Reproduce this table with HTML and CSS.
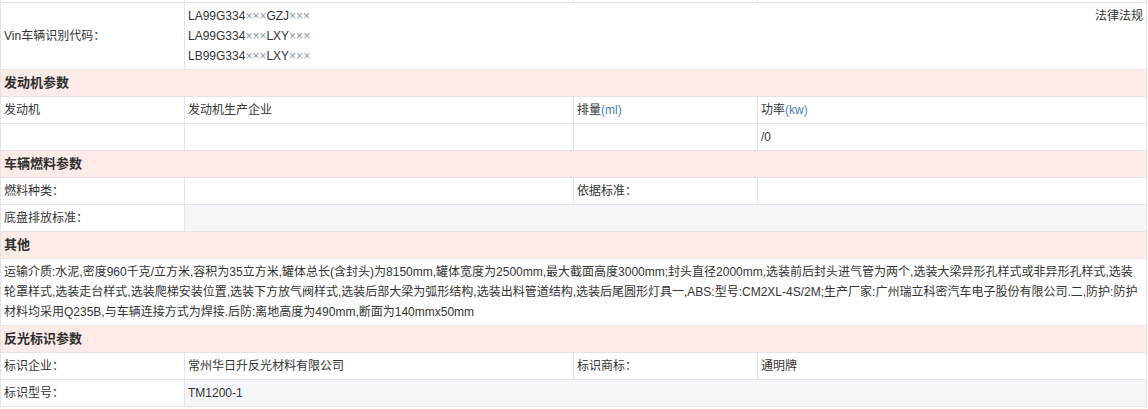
FILE: index.html
```html
<!DOCTYPE html>
<html lang="zh-CN">
<head>
<meta charset="utf-8">
<title>参数</title>
<link rel="stylesheet" href="styles.css">
</head>
<body>
<table class="params">
  <colgroup>
    <col class="c1"><col class="c2"><col class="c3"><col class="c4">
  </colgroup>
  <tr class="stub"><td></td><td></td><td></td><td></td></tr>
  <tr>
    <td>Vin车辆识别代码：</td>
    <td colspan="3" class="vin">
      <span class="law">法律法规</span>
      <div>LA99G334<span class="x">×××</span>GZJ<span class="x">×××</span></div>
      <div>LA99G334<span class="x">×××</span>LXY<span class="x">×××</span></div>
      <div>LB99G334<span class="x">×××</span>LXY<span class="x">×××</span></div>
    </td>
  </tr>
  <tr class="head"><td colspan="4">发动机参数</td></tr>
  <tr>
    <td>发动机</td>
    <td>发动机生产企业</td>
    <td>排量<span class="unit">(ml)</span></td>
    <td>功率<span class="unit">(kw)</span></td>
  </tr>
  <tr>
    <td></td><td></td><td></td><td>/0</td>
  </tr>
  <tr class="head"><td colspan="4">车辆燃料参数</td></tr>
  <tr>
    <td>燃料种类：</td><td></td><td>依据标准：</td><td></td>
  </tr>
  <tr class="alt">
    <td>底盘排放标准：</td><td colspan="3"></td>
  </tr>
  <tr class="head"><td colspan="4">其他</td></tr>
  <tr>
    <td colspan="4" class="long">运输介质:水泥,密度960千克/立方米,容积为35立方米,罐体总长(含封头)为8150mm,罐体宽度为2500mm,最大截面高度3000mm;封头直径2000mm,选装前后封头进气管为两个,选装大梁异形孔样式或非异形孔样式,选装轮罩样式,选装走台样式,选装爬梯安装位置,选装下方放气阀样式,选装后部大梁为弧形结构,选装出料管道结构,选装后尾圆形灯具一,ABS:型号:CM2XL-4S/2M;生产厂家:广州瑞立科密汽车电子股份有限公司.二,防护:防护材料均采用Q235B,与车辆连接方式为焊接.后防:离地高度为490mm,断面为140mmx50mm</td>
  </tr>
  <tr class="head"><td colspan="4">反光标识参数</td></tr>
  <tr>
    <td>标识企业：</td><td>常州华日升反光材料有限公司</td><td>标识商标：</td><td>通明牌</td>
  </tr>
  <tr class="alt">
    <td>标识型号：</td><td colspan="3">TM1200-1</td>
  </tr>
</table>
</body>
</html>
```

FILE: styles.css
```css
html, body {
  margin: 0;
  padding: 0;
  background: #ffffff;
}

body {
  font-family: "Liberation Sans", "Noto Sans CJK SC", sans-serif;
  font-size: 12px;
  color: #333333;
}

.params {
  width: 1146px;
  border-collapse: collapse;
  table-layout: fixed;
}

.params .c1 { width: 184px; }
.params .c2 { width: 389px; }
.params .c3 { width: 184px; }
.params .c4 { width: 389px; }

.params td {
  border: 1px solid #e1e5e9;
  padding: 3px 3px;
  line-height: 20px;
  height: 20px;
  vertical-align: middle;
  box-sizing: content-box;
}

.params .stub td {
  height: 2px;
  padding: 0;
  line-height: 0;
  border-top: none;
}

.params .vin {
  vertical-align: top;
}

.law {
  float: right;
}

.x {
  color: #8c9aab;
}

.unit {
  color: #3f7fc1;
}

.params .head td {
  background: #fdebe8;
  font-weight: bold;
  font-size: 13px;
  color: #2e2e2e;
}

.params .alt td + td {
  background: #f5f6f7;
}

.params .long {
  word-break: break-all;
}
```
